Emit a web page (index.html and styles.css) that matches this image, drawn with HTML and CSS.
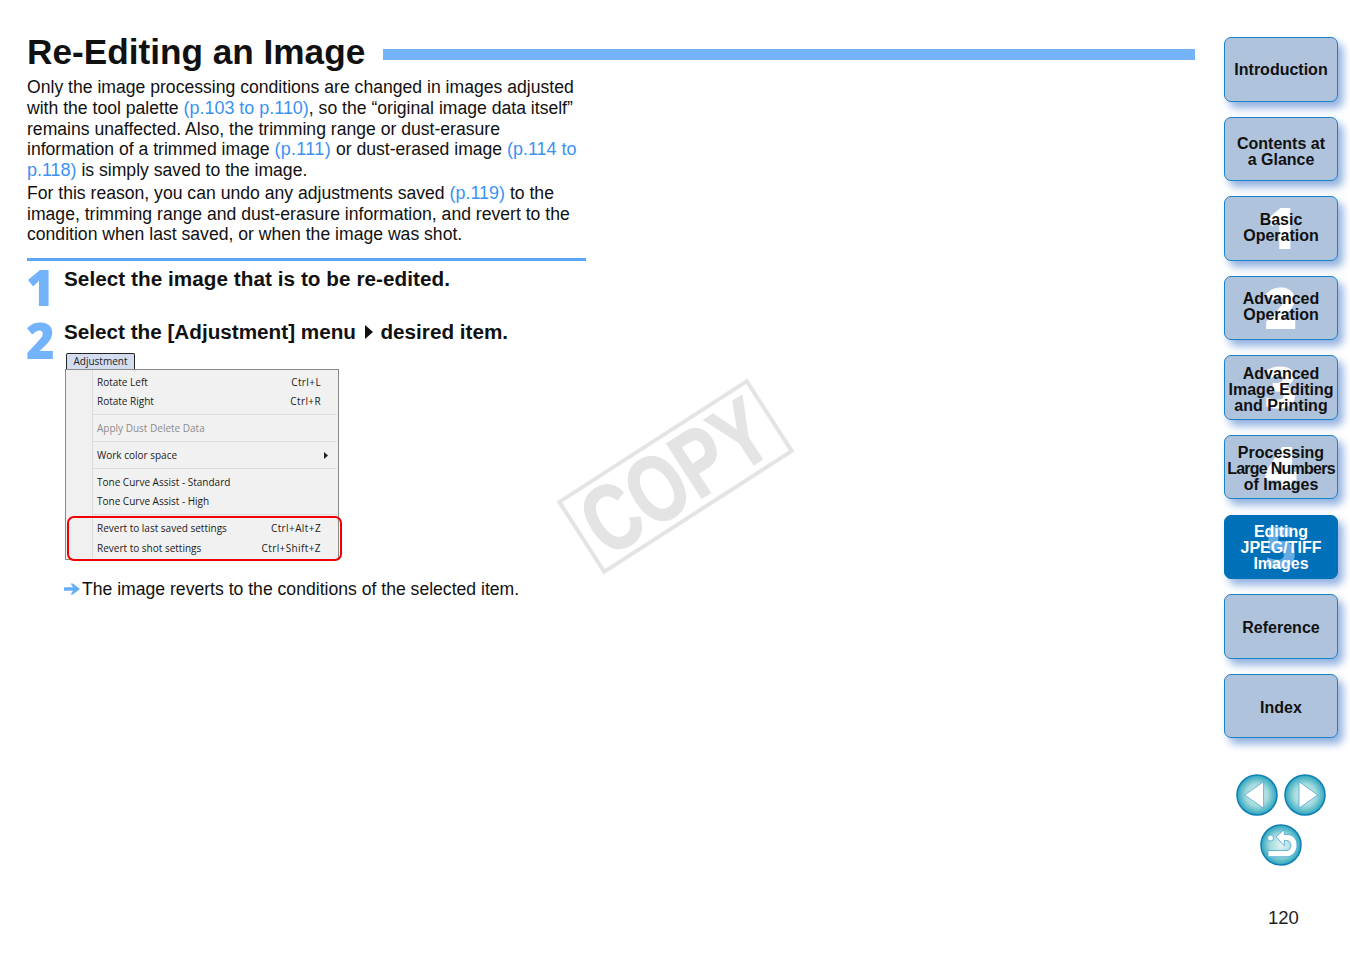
FILE: index.html
```html
<!DOCTYPE html>
<html lang="en">
<head>
<meta charset="utf-8">
<title>Re-Editing an Image</title>
<link rel="stylesheet" href="styles.css">
</head>
<body>
<div class="page">
  <main class="content">
    <header class="title-row">
      <h1>Re-Editing an Image</h1>
      <div class="title-bar"></div>
    </header>
    <section class="intro">
      <p>Only the image processing conditions are changed in images adjusted<br>with the tool palette <a>(p.103 to p.110)</a>, so the “original image data itself”<br>remains unaffected. Also, the trimming range or dust-erasure<br>information of a trimmed image <a class="wide">(p.111)</a> or dust-erased image <a>(p.114 to<br>p.118)</a> is simply saved to the image.</p>
      <p>For this reason, you can undo any adjustments saved <a>(p.119)</a> to the<br>image, trimming range and dust-erasure information, and revert to the<br>condition when last saved, or when the image was shot.</p>
    </section>
    <div class="rule"></div>
    <div class="step step-one">
      <div class="step-num">1</div>
      <h2 class="first">Select the image that is to be re-edited.</h2>
    </div>
    <div class="step step-two">
      <div class="step-num">2</div>
      <div class="step-body">
        <h2>Select the [Adjustment] menu <svg class="tri" viewBox="0 0 8 14" aria-hidden="true"><path d="M0 0 L8 7 L0 14 Z"/></svg> desired item.</h2>
        <div class="menu-tab">Adjustment</div>
        <div class="menu">
          <div class="menu-row"><span>Rotate Left</span><span class="key">Ctrl+L</span></div>
          <div class="menu-row"><span>Rotate Right</span><span class="key">Ctrl+R</span></div>
          <div class="menu-sep"></div>
          <div class="menu-row disabled"><span>Apply Dust Delete Data</span></div>
          <div class="menu-sep"></div>
          <div class="menu-row"><span>Work color space</span><svg class="sub" viewBox="0 0 4 7" aria-hidden="true"><path d="M0 0 L4 3.5 L0 7 Z"/></svg></div>
          <div class="menu-sep"></div>
          <div class="menu-row"><span>Tone Curve Assist - Standard</span></div>
          <div class="menu-row"><span>Tone Curve Assist - High</span></div>
          <div class="menu-sep"></div>
          <div class="menu-row"><span>Revert to last saved settings</span><span class="key">Ctrl+Alt+Z</span></div>
          <div class="menu-row"><span>Revert to shot settings</span><span class="key">Ctrl+Shift+Z</span></div>
          <div class="menu-mark"></div>
        </div>
        <p class="result"><svg class="arrow" viewBox="0 0 16 12" aria-hidden="true"><path d="M0 4.2 H9 L6.6 .5 L8.8 .5 L16 6 L8.8 11.5 L6.6 11.5 L9 7.8 H0 Z"/></svg>The image reverts to the conditions of the selected item.</p>
      </div>
    </div>
    <div class="watermark"><span>COPY</span></div>
  </main>
  <aside class="side">
    <nav class="tabs">
      <a class="tab low-1">Introduction</a>
      <a class="tab low-3">Contents at<br>a Glance</a>
      <a class="tab"><i>1</i><b>Basic<br>Operation</b></a>
      <a class="tab up-1"><i>2</i><b>Advanced<br>Operation</b></a>
      <a class="tab low-2"><i>3</i><b>Advanced<br>Image Editing<br>and Printing</b></a>
      <a class="tab low-2"><i>4</i><b>Processing<br><span class="tight">Large Numbers</span><br>of Images</b></a>
      <a class="tab active low-1"><i>5</i><b>Editing<br>JPEG/TIFF<br>Images</b></a>
      <a class="tab low-2">Reference</a>
      <a class="tab low-2">Index</a>
    </nav>
    <svg class="round-nav" viewBox="0 0 90 92" aria-hidden="true">
      <defs>
        <radialGradient id="ball" cx="50%" cy="50%" r="50%">
          <stop offset="0" stop-color="#e4f3f3"/>
          <stop offset=".55" stop-color="#a5dadd"/>
          <stop offset="1" stop-color="#28a5bd"/>
        </radialGradient>
      </defs>
      <g transform="translate(0 0)">
        <circle cx="21" cy="21" r="20" fill="url(#ball)" stroke="#0f7fb5" stroke-width="1.5"/>
        <path d="M8.6 21 L27.6 7.7 V34.3 Z" fill="#fff" stroke="#4aa6d6" stroke-width=".8"/>
      </g>
      <g transform="translate(48 0)">
        <circle cx="21" cy="21" r="20" fill="url(#ball)" stroke="#0f7fb5" stroke-width="1.5"/>
        <path d="M33.7 21 L15 7.7 V34.3 Z" fill="#fff" stroke="#4aa6d6" stroke-width=".8"/>
      </g>
      <g transform="translate(24 50)">
        <circle cx="21" cy="21" r="20" fill="url(#ball)" stroke="#0f7fb5" stroke-width="1.5"/>
        <circle cx="10.5" cy="14" r="3" fill="#fff" stroke="#4aa6d6" stroke-width=".8"/>
        <path d="M16 12.7 L24.3 5.7 V10.5 H27 C33 10.5 37 15 37 21 C37 28 32 32.7 27 32.7 H8 V26.5 H27 C29.5 26.5 31 24 31 21.5 C31 18.5 29 16.5 26.5 16.5 H24.3 V21.7 Z" fill="#fff" stroke="#4aa6d6" stroke-width=".8"/>
      </g>
    </svg>
    <div class="page-no">120</div>
  </aside>
</div>
</body>
</html>
```
FILE: styles.css
```css
* { box-sizing: border-box; }
html, body { margin: 0; padding: 0; background: #fff; }
body { font-family: "Liberation Sans", Arial, sans-serif; color: #111; overflow: hidden; }
.page { display: flex; width: 1350px; height: 954px; }
.content { position: relative; width: 1195px; margin-right: 29px; padding: 32px 0 0 27px; flex: none; }
.title-row { display: flex; align-items: center; gap: 18px; height: 40px; }
h1 { margin: 0; font-size: 35.2px; line-height: 40px; font-weight: 700; color: #111; white-space: nowrap; }
.title-bar { flex: 1; height: 11px; background: #75b4fb; margin-top: 4px; }
.intro { margin-top: 5px; width: 570px; font-size: 17.6px; line-height: 20.75px; }
.intro p { margin: 0 0 2px; white-space: nowrap; }
.intro a { color: #3a92f2; font-size: 17.95px; }
.intro a.wide { letter-spacing: .35px; }
.rule { width: 559px; height: 3px; background: #5aa7f7; margin-top: 13px; }
.step { display: flex; }
.step-one { margin-top: 5px; height: 53px; }
.step-num { flex: none; width: 38px; height: 46px; margin: -4px 0 0 -1px; font-family: "Open Sans", sans-serif; font-size: 49px; line-height: 50px; font-weight: 800; color: #72b3fc; }
h2 { margin: 0; font-size: 20.7px; line-height: 26px; font-weight: 700; color: #111; white-space: nowrap; }
h2.first { letter-spacing: .05px; }
.tri { width: 8px; height: 14px; margin: 0 2px 0 3px; fill: #111; }
.menu-tab { width: 69px; height: 16px; margin: 8px 0 0 2px; border: 1px solid #222; border-bottom: none; border-radius: 2px 2px 0 0; background: #d4dcef; font-family: "Open Sans", sans-serif; font-size: 10px; line-height: 15px; text-align: center; color: #222; }
.menu { position: relative; width: 274px; height: 191px; margin-left: 1px; padding: 2px 17px 0 26px; border: 1px solid #8a8a8a; background: linear-gradient(to right, #f0f0f0 26px, #dcdcdc 26px, #dcdcdc 27px, #f1f1f1 27px); font-family: "Open Sans", sans-serif; font-size: 10px; color: #1a1a1a; }
.menu-row { display: flex; justify-content: space-between; align-items: center; height: 19.5px; padding-left: 5px; white-space: nowrap; }
.key { letter-spacing: .4px; }
.menu-sep { height: 7.4px; position: relative; }
.menu-sep::after { content: ""; position: absolute; left: 1px; right: -16px; top: 3px; height: 1px; background: #dddddd; }
.disabled { color: #8c8c8c; }
.sub { width: 4px; height: 7px; fill: #222; margin-right: -4px; position: relative; left: 3px; }
.menu-mark { position: absolute; left: 1px; top: 146px; width: 275px; height: 45px; border: 2.5px solid #f00000; border-radius: 7px; }
.result { margin: 18px 0 0; font-size: 17.6px; line-height: 22px; white-space: nowrap; display: flex; align-items: center; }
.arrow { width: 16px; height: 12px; margin-right: 2px; fill: #66aef5; }
.watermark { position: absolute; left: 562px; top: 433px; width: 227px; height: 87px; border: 4.5px solid #e4e4e4; transform: rotate(-32.8deg); display: flex; align-items: center; justify-content: center; overflow: hidden; }
.watermark span { font-size: 94px; line-height: 78px; font-weight: 700; color: #e4e4e4; -webkit-text-stroke: 1.5px #e4e4e4; transform: scaleX(.76); white-space: nowrap; }
.side { width: 126px; flex: none; padding-top: 37px; }
.tabs { display: flex; flex-direction: column; gap: 15.1px; width: 114px; }
.tab { position: relative; height: 64.5px; display: flex; align-items: center; justify-content: center; text-align: center; background: #afc3dc; border: 1.5px solid #1b82c8; border-radius: 7px; box-shadow: 5px 6px 8px #8fb0e0; font-size: 16px; line-height: 16px; font-weight: 700; color: #111; white-space: nowrap; }
.tab b { position: relative; font-weight: 700; }
.tab i { position: absolute; left: 0; right: 0; top: 0; text-align: center; font-family: "Open Sans", sans-serif; font-style: normal; font-weight: 800; font-size: 56px; line-height: 60px; color: #fff; }
.tight { letter-spacing: -.75px; }
.low-1 { padding-top: 2px; }
.low-2 { padding-top: 4px; }
.low-3 { padding-top: 6px; }
.up-1 { padding-bottom: 2px; }
.active { background: #0070b8; border-color: #0070b8; color: #fff; }
.active i { color: #62abe4; }
.round-nav { display: block; width: 90px; height: 92px; margin: 36px 0 0 12px; }
.page-no { margin: 42px 0 0 44px; font-size: 18.5px; line-height: 20px; color: #222; }
```
